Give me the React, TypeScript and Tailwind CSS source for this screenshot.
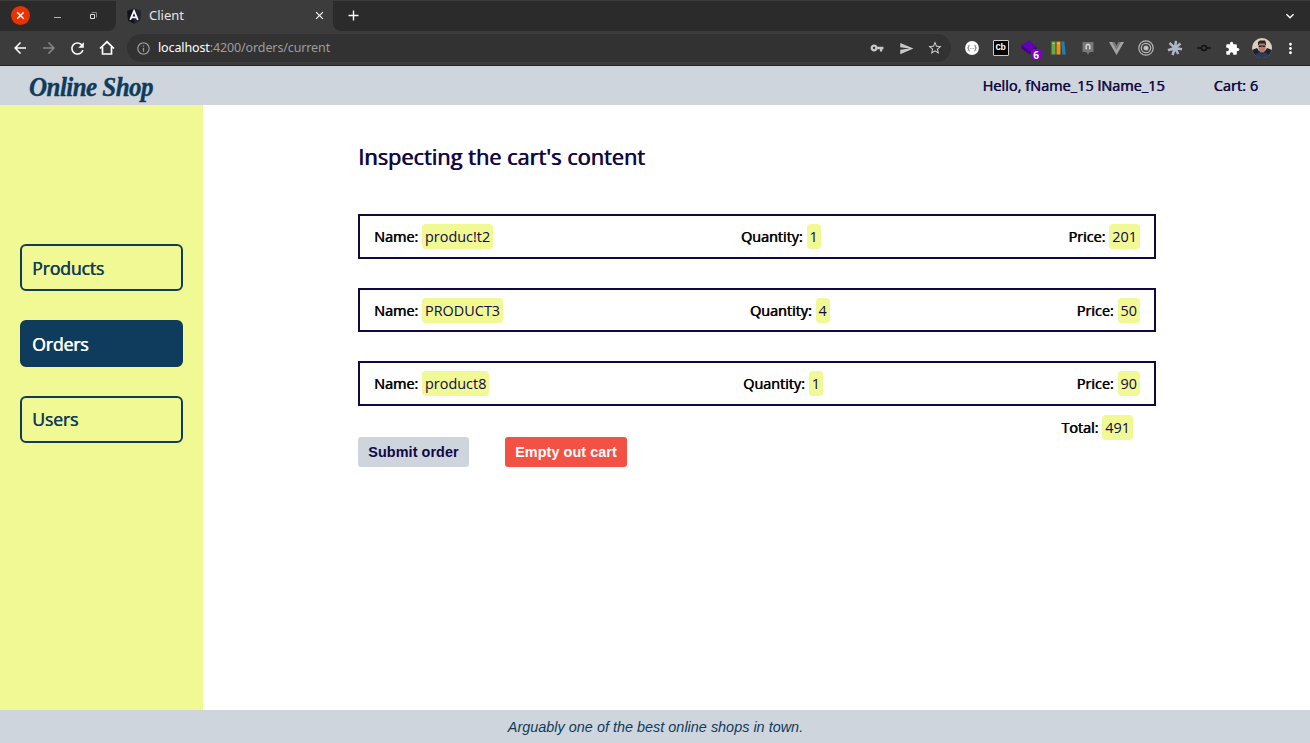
import type { ReactNode } from 'react';
import {
  MdArrowBack,
  MdArrowForward,
  MdClose,
  MdAdd,
  MdRefresh,
  MdInfoOutline,
  MdVpnKey,
  MdSend,
  MdStarBorder,
  MdExtension,
  MdMoreVert,
  MdKeyboardArrowDown,
} from 'react-icons/md';

const heavy = '[text-shadow:0.6px_0_0_currentColor]';

function TabStrip() {
  return (
    <div className="flex h-[31px] items-stretch border-t border-[#3c3c3c] bg-[#3c3c3c] font-['Noto_Sans',sans-serif]">
      <div className="flex w-[116px] shrink-0 items-center rounded-br-lg bg-[#2b2b2b] pb-px pl-[11px]">
        <span className="flex size-[19px] items-center justify-center rounded-full bg-[#eb3300]">
          <svg width="9" height="9" viewBox="0 0 9 9" stroke="#fff" strokeWidth="1.5"><path d="M1.200 1.200l6.600 6.600M7.800 1.200L1.200 7.800" /></svg>
        </span>
        <svg className="ml-[24px]" width="8" height="9" viewBox="0 0 8 9"><path d="M0 6.500h7" stroke="#b5b5b5" strokeWidth="1" /></svg>
        <svg className="ml-[27px]" width="9" height="9" viewBox="0 0 9 9" fill="none">
          <path d="M2.500 1.500h5v5" stroke="#888" /><path d="M1.500 3.500h4v4h-4z" stroke="#ddd" />
        </svg>
      </div>
      <div className="flex w-[217px] shrink-0 items-center bg-[#3c3c3c] pb-px pl-[10px] pr-[7px]">
        <svg className="mt-px" width="16" height="16" viewBox="0 0 16 16">
          <path d="M8 0.5L15 3l-1 9.5L8 15.7 2 12.500 1 3z" fill="#12131f" />
          <path d="M8 0.500L15 3l-1 9.500L8 15.700z" fill="#252739" />
          <path d="M4.200 11.800L8 3l3.800 8.800M5.700 9.400h4.600" fill="none" stroke="#fff" strokeWidth="1.700" />
        </svg>
        <span className="ml-[7px] text-[13px] text-[#e6e6e6]">Client</span>
        <MdClose className="ml-auto size-[13px] text-white" />
      </div>
      <div className="flex flex-1 items-center rounded-bl-lg bg-[#2b2b2b] pb-px">
        <MdAdd className="ml-[12px] size-[17px] text-white" />
        <MdKeyboardArrowDown className="ml-auto mr-[12px] size-[16px] text-white" />
      </div>
    </div>
  );
}

function Slot({ children }: { children: ReactNode }) {
  return <span className="flex w-[29px] shrink-0 items-center justify-center">{children}</span>;
}

function Extensions() {
  return (
    <div className="flex items-center">
      <Slot>
        <svg width="14" height="14" viewBox="0 0 14 14" fill="none">
          <circle cx="7" cy="7" r="6.900" fill="#fff" />
          <path d="M4.600 4Q3.500 4 3.600 5.700 3.600 6.800 2.700 7 3.600 7.200 3.600 8.300 3.500 10 4.600 10M9.400 4Q10.500 4 10.400 5.700 10.400 6.800 11.300 7 10.400 7.200 10.400 8.300 10.500 10 9.400 10" stroke="#555" strokeWidth="0.900" />
          <path d="M5.300 7.500h1M7.700 7.500h1" stroke="#888" />
        </svg>
      </Slot>
      <Slot>
        <span className="flex size-[16px] items-center justify-center rounded-[1px] border-[1.500px] border-[#ccc] bg-black font-['Liberation_Mono',monospace] text-[9px] font-bold leading-none tracking-[-0.400px] text-white">Cb</span>
      </Slot>
      <Slot>
        <span className="relative block size-[18px]">
          <svg className="absolute left-0 top-[1px]" width="16" height="16" viewBox="0 0 16 16">
            <path d="M0.500 5.500L8 0.500 15.500 7v2L8.500 14.500 0.500 8.500z" fill="#42007e" />
            <path d="M0.500 5.500L8 0.500 15.500 6.500 8.500 11z" fill="#6200b8" />
          </svg>
          <span className="absolute left-[10px] top-[10px] flex h-[11px] w-[11px] items-center justify-center rounded-[2px] bg-[#7f00c9] font-['Noto_Sans',sans-serif] text-[10px] font-bold leading-none text-white">6</span>
        </span>
      </Slot>
      <Slot>
        <svg width="15" height="14" viewBox="0 0 15 14">
          <path d="M0.500 0.500h4v13h-4z" fill="#61ad45" /><path d="M5.500 0.500h4v13h-4z" fill="#ee9413" /><path d="M10.300 0.500h3l1.500 13h-3.500z" fill="#247fb9" />
          <path d="M1.200 2.500h2.600M6.200 2.500h2.600" stroke="#ffffff66" />
        </svg>
      </Slot>
      <Slot>
        <svg width="12" height="14" viewBox="0 0 12 14">
          <path d="M0.500 1h11v10H8L6 13.500 4 11H.5z" fill="#777" />
          <path d="M5 7.700H3.500M8.500 7.700H7M4.600 7.500Q3.300 6 4.300 4.300 6 2.700 7.700 4.300 8.700 6 7.400 7.500" fill="none" stroke="#ddd" strokeWidth="1.200" />
        </svg>
      </Slot>
      <Slot>
        <svg width="15" height="13" viewBox="0 0 15 13">
          <path d="M0 0h5l2.500 4.500L10 0h5L7.500 13z" fill="#a5a5a5" /><path d="M3 0h2.500l2 3.500 2-3.500H12L7.500 8z" fill="#777" />
        </svg>
      </Slot>
      <Slot>
        <svg width="16" height="16" viewBox="0 0 16 16" fill="none" stroke="#b8b8b8" strokeWidth="1.200">
          <circle cx="8" cy="8" r="7.200" /><circle cx="8" cy="8" r="4.700" /><circle cx="8" cy="8" r="2" fill="#ccc" />
        </svg>
      </Slot>
      <Slot>
        <svg width="16" height="16" viewBox="0 0 16 16" stroke="#aeb7c4" strokeWidth="2.500">
          <path d="M8 8L9 .8M8 8l5.500-4.500M8 8l7 1.300M8 8l3.300 6M8 8l-2.500 7M8 8L1 10.300M8 8L2.500 3" />
        </svg>
      </Slot>
      <Slot>
        <svg width="16" height="8" viewBox="0 0 16 8" fill="none" stroke="#111">
          <path d="M1 4h4M11 4h4" strokeWidth="1.600" /><circle cx="8" cy="4" r="2.500" strokeWidth="1.400" />
        </svg>
      </Slot>
      <Slot><MdExtension className="size-[15px] text-white" /></Slot>
      <Slot>
        <svg width="20" height="20" viewBox="0 0 20 20">
          <defs><clipPath id="face"><circle cx="10" cy="10" r="10" /></clipPath></defs>
          <g clipPath="url(#face)">
            <path d="M0 0h20v20H0z" fill="#dccfb9" /><path d="M0 12l5-2 2 3h6l2-3 5 2v8H0z" fill="#192236" />
            <path d="M6.500 4h7v7L12 14.500H8L6.500 11z" fill="#b77c63" />
            <path d="M6 7V4l2-1.500h5L14 5v2h-1V5.500H7V7z" fill="#252326" /><path d="M6.700 7.500h6.600V9h-2.500l-.8-.7-.8.7H6.700z" fill="#27243a" />
            <path d="M3 20l1-4 4-2 2 2 2-2 4 2 1 4z" fill="#2b3c5c" />
          </g>
        </svg>
      </Slot>
      <Slot><MdMoreVert className="size-[17px] text-white" /></Slot>
    </div>
  );
}

function Toolbar() {
  return (
    <div className="flex h-[35px] items-center border-b border-[#222] bg-[#3c3c3c] pl-[5px] pr-[5px] text-white">
      <Slot><MdArrowBack className="size-[18px]" /></Slot>
      <Slot><MdArrowForward className="size-[18px] text-[#888]" /></Slot>
      <Slot><MdRefresh className="size-[19px]" /></Slot>
      <Slot>
        <svg width="16" height="16" viewBox="0 0 16 16" fill="none" stroke="#fff" strokeWidth="1.700"><path d="M1 8.500L8 1.800l7 6.700M3.500 7v7h9V7" /></svg>
      </Slot>
      <div className="ml-[6px] flex h-[28px] w-[824px] shrink-0 items-center rounded-full bg-[#323232] pl-[9px] pr-[1.500px]">
        <MdInfoOutline className="size-[15px] text-[#9a9a9a]" />
        <span className="ml-[7px] font-['Noto_Sans',sans-serif] text-[12.500px] tracking-[-0.120px] text-[#9d9d9d]"><span className="text-white">localhost</span>:4200/orders/current</span>
        <div className="ml-auto flex text-[#c8c8c8]">
          <Slot><MdVpnKey className="size-[14px]" /></Slot>
          <Slot><MdSend className="size-[15px]" /></Slot>
          <Slot><MdStarBorder className="size-[16px]" /></Slot>
        </div>
      </div>
      <div className="ml-auto"><Extensions /></div>
    </div>
  );
}

function Field({ label, value }: { label: string; value: string }) {
  return (
    <div className="flex items-center gap-[4px] text-[14.400px] leading-[25px]">
      <span className={`text-black ${heavy}`}>{label}:</span>
      <span className="rounded-[4px] bg-[#f0f993] px-[3px] tracking-[0.020px] text-[#110844]">{value}</span>
    </div>
  );
}

const items = [
  { name: 'produc!t2', quantity: '1', price: '201', box: 'h-[45px]' },
  { name: 'PRODUCT3', quantity: '4', price: '50', box: 'h-[44px] mt-[29px]' },
  { name: 'product8', quantity: '1', price: '90', box: 'h-[45px] mt-[29px]' },
];

const links = [
  { label: 'Products', look: 'pt-[2px] text-[#0f3b5c]' },
  { label: 'Orders', look: 'pt-[2px] bg-[#0f3b5c] text-white' },
  { label: 'Users', look: 'text-[#0f3b5c]' },
];

export default function App() {
  return (
    <div className="flex h-[743px] w-[1310px] flex-col overflow-hidden bg-white font-['Open_Sans',sans-serif]">
      <TabStrip />
      <Toolbar />
      <header className="flex h-[39px] shrink-0 items-center bg-[#ced5dd] pl-[29px] pr-[52px] text-[14.400px] tracking-[0.080px] text-[#110844]">
        <span className="origin-left scale-x-[0.910] whitespace-nowrap pt-[2px] font-['Liberation_Serif',serif] text-[27.500px] font-bold italic leading-none tracking-[-0.600px] text-[#0f3b5c] [-webkit-text-stroke:0.4px_currentColor]">Online Shop</span>
        <span className={`ml-auto ${heavy}`}>Hello, fName_15 lName_15</span>
        <span className={`ml-[49px] ${heavy}`}>Cart: 6</span>
      </header>
      <div className="flex min-h-0 flex-1">
        <nav className="flex w-[203px] shrink-0 flex-col gap-[29px] bg-[#f0f993] px-[20px] pt-[139px]">
          {links.map((l) => (
            <a key={l.label} className={`flex h-[47px] items-center rounded-[6px] border-2 border-[#0f3b5c] pl-[10px] text-[17.600px] tracking-[-0.120px] ${heavy} ${l.look}`}>{l.label}</a>
          ))}
        </nav>
        <main className="ml-[155px] w-[798px] pt-[36px]">
          <h1 className="h-[73px] text-[21.600px] leading-[32px] tracking-[0.080px] text-[#110844] [text-shadow:0.8px_0_0_currentColor]">Inspecting the cart's content</h1>
          {items.map((i) => (
            <div key={i.name} className={`flex items-start justify-between border-2 border-[#110844] px-[14px] pt-[8px] ${i.box}`}>
              <Field label="Name" value={i.name} />
              <Field label="Quantity" value={i.quantity} />
              <Field label="Price" value={i.price} />
            </div>
          ))}
          <div className="mt-[9px] flex h-[22px] items-start justify-end pr-[23px]"><Field label="Total" value="491" /></div>
          <div className="flex gap-[36px] font-['Liberation_Sans',sans-serif] text-[14.400px] font-bold tracking-[0.060px]">
            <button className="h-[30px] w-[111px] rounded-[3px] bg-[#ced5dd] pt-[2px] text-[#110844]">Submit order</button>
            <button className="h-[30px] w-[122px] rounded-[3px] bg-[#f35143] pt-[2px] text-white">Empty out cart</button>
          </div>
        </main>
      </div>
      <footer className="flex h-[33px] shrink-0 items-center justify-center bg-[#ced5dd] pl-px pt-[2px] font-['Liberation_Sans',sans-serif] text-[14.400px] italic tracking-[0.020px] text-[#0f3b5c]">Arguably one of the best online shops in town.</footer>
    </div>
  );
}
